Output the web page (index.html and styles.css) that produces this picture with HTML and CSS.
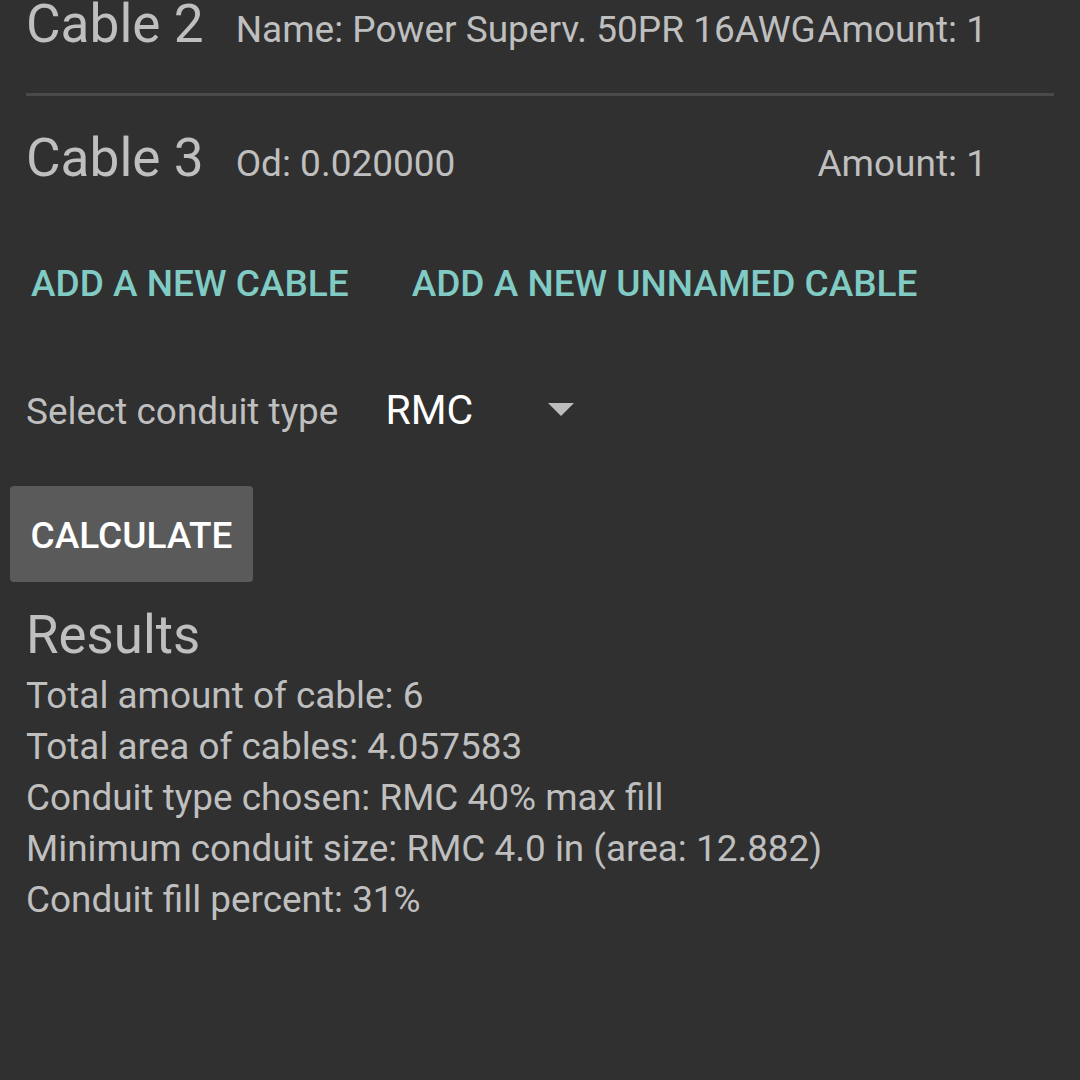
FILE: index.html
```html
<!DOCTYPE html>
<html lang="en">
<head>
<meta charset="utf-8">
<title>Conduit fill calculator</title>
<link rel="stylesheet" href="styles.css">
</head>
<body>
<main class="screen">
  <section class="cable-list">
    <div class="cable-row first">
      <span class="cable-title">Cable 2</span>
      <span class="cable-detail">Name: Power Superv. 50PR 16AWG</span>
      <span class="cable-amount">Amount: 1</span>
    </div>
    <div class="divider"></div>
    <div class="cable-row second">
      <span class="cable-title">Cable 3</span>
      <span class="cable-detail">Od: 0.020000</span>
      <span class="cable-amount">Amount: 1</span>
    </div>
  </section>

  <div class="actions">
    <button class="text-btn">ADD A NEW CABLE</button>
    <button class="text-btn">ADD A NEW UNNAMED CABLE</button>
  </div>

  <div class="select-row">
    <span class="select-label">Select conduit type</span>
    <span class="spinner">
      <span class="spinner-value">RMC</span>
      <svg class="spinner-arrow" width="26" height="13" viewBox="0 0 26 13"><polygon points="0,0 26,0 13,13" fill="#bdbdbd"/></svg>
    </span>
  </div>

  <button class="calc-btn">CALCULATE</button>

  <section class="results">
    <h2 class="results-title">Results</h2>
    <p class="result-line">Total amount of cable: 6</p>
    <p class="result-line">Total area of cables: 4.057583</p>
    <p class="result-line">Conduit type chosen: RMC 40% max fill</p>
    <p class="result-line">Minimum conduit size: RMC 4.0 in (area: 12.882)</p>
    <p class="result-line">Conduit fill percent: 31%</p>
  </section>
</main>
</body>
</html>
```

FILE: styles.css
```css
html, body {
  margin: 0;
  padding: 0;
  background: #303030;
}

body {
  width: 1080px;
  height: 1080px;
  overflow: hidden;
  font-family: Roboto, "Noto Sans", sans-serif;
  color: #bfbfbf;
}

.screen {
  display: flex;
  flex-direction: column;
  align-items: flex-start;
}

.cable-list {
  align-self: stretch;
  padding: 0 26px;
}

.cable-row {
  display: flex;
  align-items: baseline;
  padding-right: 67px;
  white-space: nowrap;
}

.cable-row.first {
  margin-top: -6px;
}

.cable-row.second {
  margin-top: 32px;
}

.cable-title {
  font-size: 53.2px;
  line-height: 60px;
}

.cable-detail {
  font-size: 37px;
  margin-left: 32px;
}

.cable-amount {
  flex: 1;
  text-align: right;
  font-size: 37px;
}

.divider {
  height: 3px;
  background: #4a4a4a;
  margin-top: 39px;
}

.actions {
  display: flex;
  gap: 63px;
  padding-left: 31px;
  margin-top: 75.5px;
}

.text-btn {
  background: none;
  border: none;
  padding: 0;
  margin: 0;
  font-family: Roboto, "Noto Sans", sans-serif;
  font-weight: 500;
  font-size: 37px;
  line-height: 40px;
  color: #80cbc4;
}

.select-row {
  display: flex;
  align-items: baseline;
  padding-left: 26px;
  margin-top: 82px;
  line-height: 48px;
}

.select-label {
  font-size: 36.9px;
}

.spinner {
  display: flex;
  align-items: baseline;
  margin-left: 47px;
}

.spinner-value {
  font-size: 41px;
  color: #ffffff;
}

.spinner-arrow {
  align-self: flex-start;
  margin-left: 75px;
  margin-top: 17.5px;
}

.calc-btn {
  margin: 50.5px 0 0 10px;
  width: 243px;
  height: 96px;
  padding: 3px 0 0;
  border: none;
  border-radius: 4px;
  background: #5a5a5b;
  color: #ffffff;
  font-family: Roboto, "Noto Sans", sans-serif;
  font-weight: 500;
  font-size: 37px;
  line-height: 40px;
}

.results {
  padding-left: 26px;
  margin-top: 23px;
}

.results-title {
  margin: 0 0 5px;
  font-size: 52.8px;
  font-weight: 400;
  line-height: 60px;
}

.result-line {
  margin: 0;
  font-size: 36.9px;
  line-height: 51px;
}
```
